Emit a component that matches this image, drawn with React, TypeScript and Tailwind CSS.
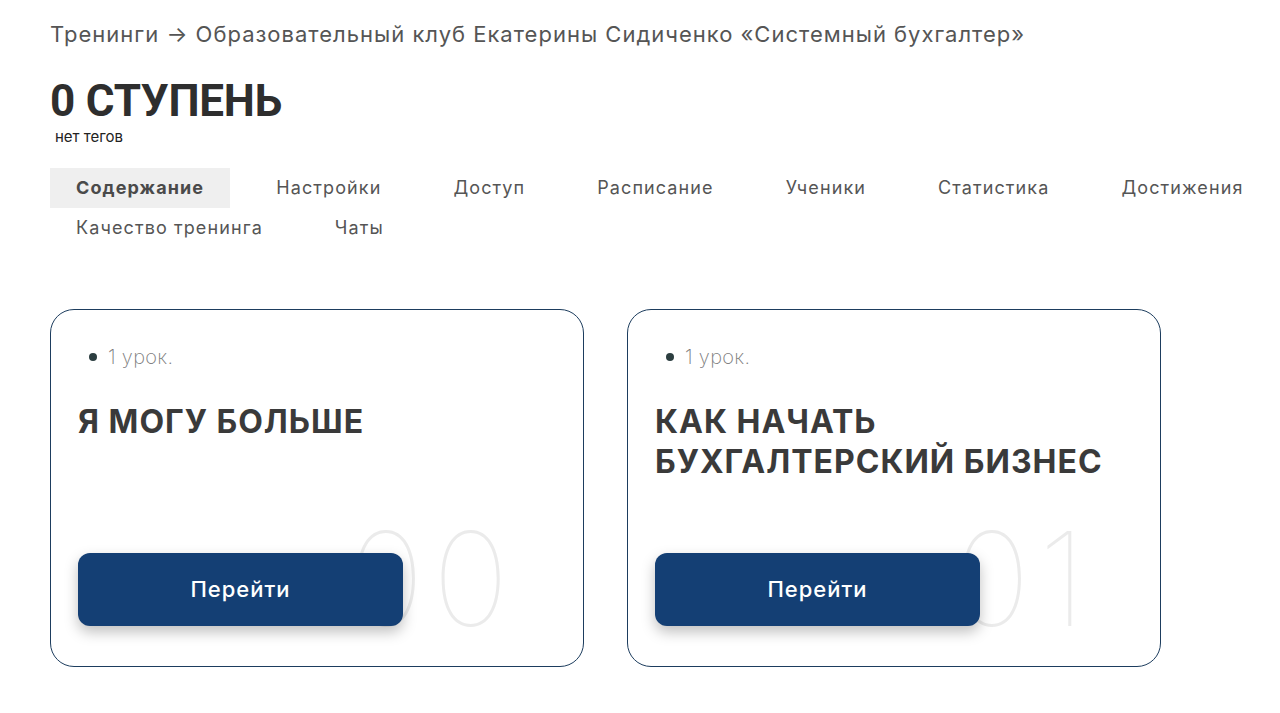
import React from 'react'

const tabs = [
  'Содержание',
  'Настройки',
  'Доступ',
  'Расписание',
  'Ученики',
  'Статистика',
  'Достижения',
  'Качество тренинга',
  'Чаты',
]

const lessons = [
  { num: '00', title: ['Я МОГУ БОЛЬШЕ'] },
  { num: '01', title: ['КАК НАЧАТЬ', 'БУХГАЛТЕРСКИЙ БИЗНЕС'] },
]

function LessonCard({ num, title }: { num: string; title: string[] }) {
  return (
    <div className="relative h-[358px] w-[534px] overflow-hidden rounded-[24px] border border-[#1d3d5e] bg-white px-[27px] pt-[32px] pb-[40px] flex flex-col">
      <span className="pointer-events-none absolute right-[66px] top-[204px] text-[130px] leading-none font-thin tracking-[8px] text-[#ebebeb] select-none">
        {num}
      </span>
      <ul className="relative pl-[11px] text-[20px] font-extralight tracking-[0.3px] text-[#7d7d7d]">
        <li className="flex items-center gap-[11px]">
          <span className="h-[8px] w-[8px] rounded-full bg-[#2c3e40]" />
          1 урок.
        </li>
      </ul>
      <h3 className="relative mt-[30px] text-[32px] leading-[40px] font-bold tracking-[1px] text-[#3a3a3a]">
        {title.map((t) => (
          <div key={t}>{t}</div>
        ))}
      </h3>
      <button className="relative mt-auto h-[73px] w-[325px] rounded-[12px] bg-[#143f74] text-[22px] font-medium tracking-[1px] text-white shadow-[0_6px_14px_rgba(0,0,0,0.25)]">
        Перейти
      </button>
    </div>
  )
}

export default function App() {
  return (
    <div className="min-h-[713px] bg-white px-[50px] pt-[20px] font-['Inter',sans-serif] text-[#444]">
      <p className="text-[22px] leading-[28px] tracking-[1px] text-[#555]">
        Тренинги → Образовательный клуб Екатерины Сидиченко «Системный бухгалтер»
      </p>
      <h1 className="mt-[29px] font-['Roboto',sans-serif] text-[44px] leading-[48px] font-bold tracking-[-0.2px] text-[#2e2e2e]">
        0 СТУПЕНЬ
      </h1>
      <p className="mt-[3px] ml-[5px] text-[15px] leading-[18px] text-[#222]">нет тегов</p>

      <nav className="-mr-[50px] mt-[22px] flex flex-wrap gap-x-[20px] text-[18px] tracking-[1.1px] text-[#555]">
        {tabs.map((t, i) => (
          <span
            key={t}
            className={
              i === 0
                ? 'h-[40px] px-[26px] leading-[40px] bg-[#efefef] font-bold text-[#4a4a4a]'
                : 'h-[40px] px-[26px] leading-[40px]'
            }
          >
            {t}
          </span>
        ))}
      </nav>

      <div className="mt-[61px] flex gap-[43px]">
        {lessons.map((l) => (
          <LessonCard key={l.num} num={l.num} title={l.title} />
        ))}
      </div>
    </div>
  )
}
